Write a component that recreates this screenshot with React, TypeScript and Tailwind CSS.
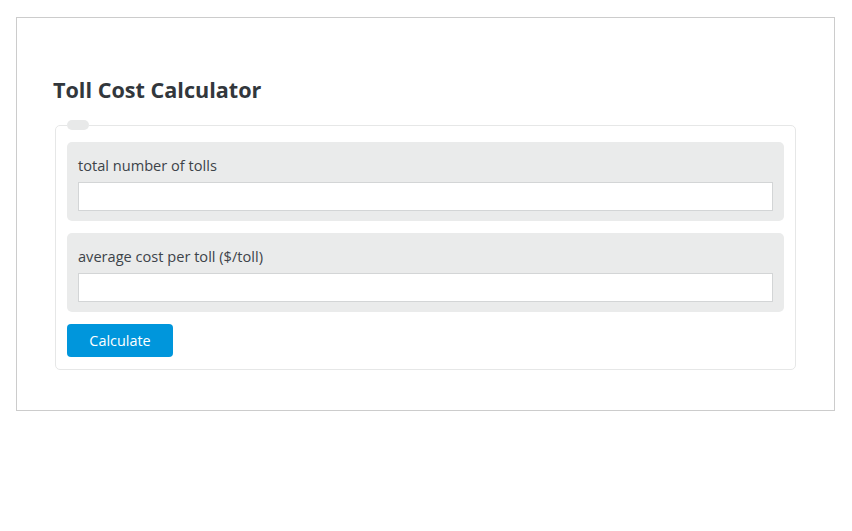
export default function App() {
  const fields = ['total number of tolls', 'average cost per toll ($/toll)'];

  return (
    <div className="min-h-screen bg-white pl-4 pt-[17px]" style={{ fontFamily: '"Open Sans", "Noto Sans", sans-serif' }}>
      <div className="w-[819px] border border-[#cccccc] px-[38px] pt-[57px] pb-[40px]">
        <h2 className="text-[21.6px] leading-[30px] font-bold text-[#32373c] -ml-[2px] mb-[15px]">Toll Cost Calculator</h2>

        <fieldset className="border border-[#e6e7e7] rounded-[5px] px-[11px] pt-3 pb-3">
          <legend className="w-[22px] h-[10px] rounded-full bg-[#e8e9e9] p-0"></legend>
          <div className="flex flex-col gap-3">
            {fields.map((f) => (
              <div key={f} className="bg-[#eaebeb] rounded-[5px] px-[11px] pt-[13px] pb-[10px]">
                <label className="block text-[14.6px] leading-5 text-[#3d4349] mb-[7px]">{f}</label>
                <input type="text" className="block w-full h-[29px] bg-white border border-[#d3d5d6] outline-none" />
              </div>
            ))}
            <div>
              <button className="w-[106px] h-[33px] rounded-[4px] bg-[#0096dc] text-white text-[14.4px]">Calculate</button>
            </div>
          </div>
        </fieldset>
      </div>
    </div>
  );
}
